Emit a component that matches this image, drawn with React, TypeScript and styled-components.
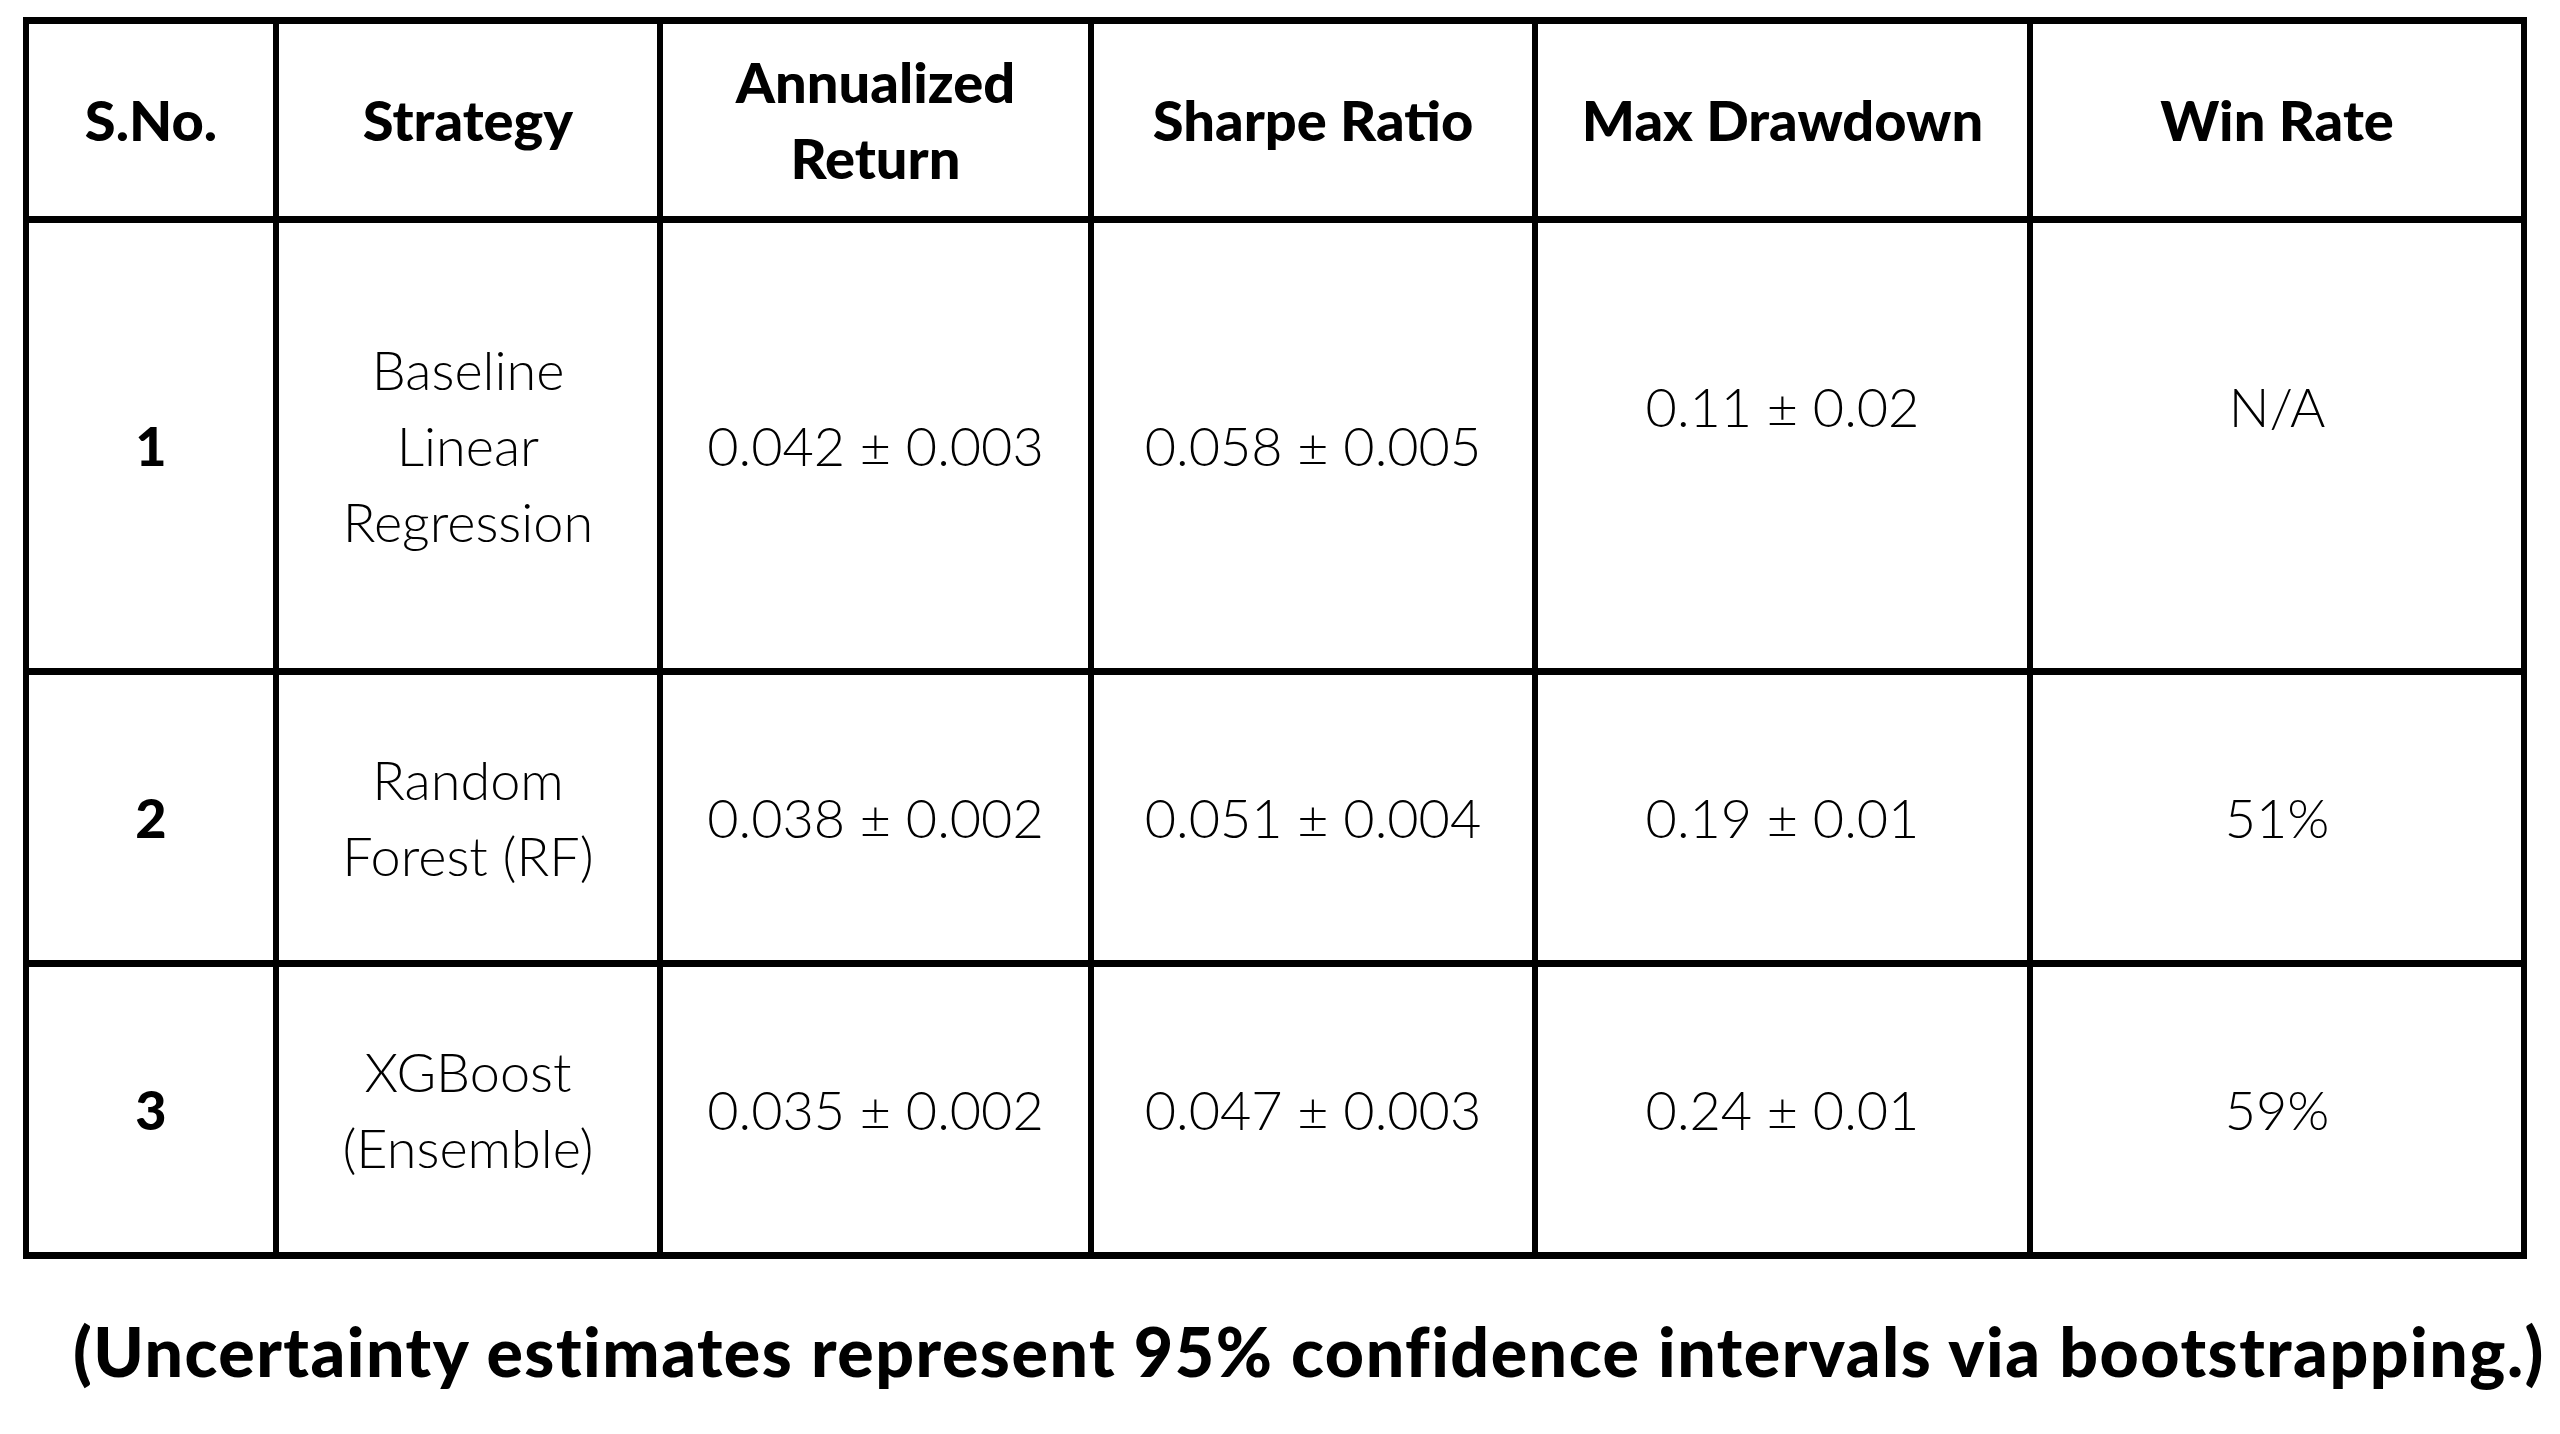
import React from 'react';
import styled, { createGlobalStyle } from 'styled-components';

const GlobalStyle = createGlobalStyle`
  html, body {
    margin: 0;
    padding: 0;
    background: #ffffff;
  }
  body {
    font-family: Lato, "Noto Sans", "Liberation Sans", sans-serif;
    color: #000000;
  }
`;

const Page = styled.div`
  padding: 17px 0 0 23px;
  width: 2560px;
  height: 1434px;
  box-sizing: border-box;
`;

const Grid = styled.div`
  display: grid;
  grid-template-columns: 244px 378px 425px 438px 489px 488px;
  grid-template-rows: 192px 445px 285px 285px;
  gap: 7px 6px;
  padding: 7px 6px;
  width: 2504px;
  box-sizing: border-box;
  background: #000000;
`;

const Cell = styled.div<{ $head?: boolean; $raised?: boolean }>`
  background: #ffffff;
  display: flex;
  align-items: center;
  justify-content: center;
  text-align: center;
  font-size: ${({ $head }) => ($head ? '56px' : '54px')};
  font-weight: ${({ $head }) => ($head ? 900 : 300)};
  line-height: 76px;
  padding-bottom: ${({ $raised }) => ($raised ? '78px' : '0')};
  box-sizing: border-box;
`;

const SerialCell = styled(Cell)`
  font-weight: 900;
`;

const Note = styled.p`
  margin: 52px 0 0 50px;
  font-size: 68px;
  font-weight: 900;
  line-height: 80px;
  letter-spacing: 1.5px;
  white-space: nowrap;
`;

type Row = {
  no: string;
  strategy: string[];
  annual: string;
  sharpe: string;
  drawdown: string;
  winRate: string;
  raised?: boolean;
};

const headers: string[][] = [
  ['S.No.'],
  ['Strategy'],
  ['Annualized', 'Return'],
  ['Sharpe Ratio'],
  ['Max Drawdown'],
  ['Win Rate'],
];

const rows: Row[] = [
  {
    no: '1',
    strategy: ['Baseline', 'Linear', 'Regression'],
    annual: '0.042 ± 0.003',
    sharpe: '0.058 ± 0.005',
    drawdown: '0.11 ± 0.02',
    winRate: 'N/A',
    raised: true,
  },
  {
    no: '2',
    strategy: ['Random', 'Forest (RF)'],
    annual: '0.038 ± 0.002',
    sharpe: '0.051 ± 0.004',
    drawdown: '0.19 ± 0.01',
    winRate: '51%',
  },
  {
    no: '3',
    strategy: ['XGBoost', '(Ensemble)'],
    annual: '0.035 ± 0.002',
    sharpe: '0.047 ± 0.003',
    drawdown: '0.24 ± 0.01',
    winRate: '59%',
  },
];

const Lines: React.FC<{ parts: string[] }> = ({ parts }) => (
  <span>
    {parts.map((p, i) => (
      <React.Fragment key={p}>
        {i > 0 && <br />}
        {p}
      </React.Fragment>
    ))}
  </span>
);

const App: React.FC = () => {
  return (
    <>
      <GlobalStyle />
      <Page>
        <Grid>
          {headers.map((h) => (
            <Cell $head key={h.join(' ')}>
              <Lines parts={h} />
            </Cell>
          ))}
          {rows.map((r) => (
            <React.Fragment key={r.no}>
              <SerialCell>{r.no}</SerialCell>
              <Cell>
                <Lines parts={r.strategy} />
              </Cell>
              <Cell>{r.annual}</Cell>
              <Cell>{r.sharpe}</Cell>
              <Cell $raised={r.raised}>{r.drawdown}</Cell>
              <Cell $raised={r.raised}>{r.winRate}</Cell>
            </React.Fragment>
          ))}
        </Grid>
        <Note>(Uncertainty estimates represent 95% confidence intervals via bootstrapping.)</Note>
      </Page>
    </>
  );
};

export default App;
